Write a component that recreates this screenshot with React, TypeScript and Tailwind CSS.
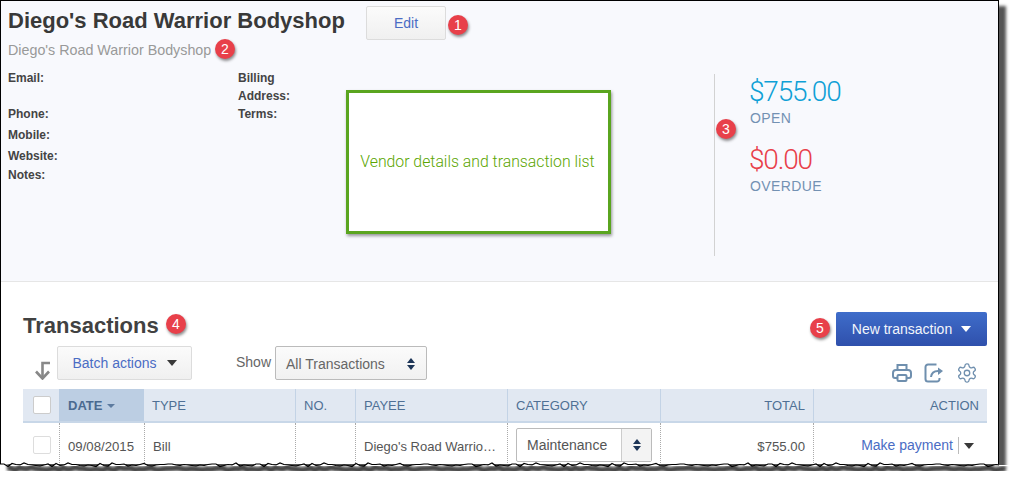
import { ReactNode } from 'react';

const tornPoints = (() => {
  const pts: [number, number][] = [];
  const jitter = [0, 1.5, 0.5, 2, 1, -0.5, 1.5, 0, 2, 0.5, 1, -1, 1.5, 0.5, 2.5, 1];
  for (let i = 0; i <= 250; i++) {
    const x = i * 4;
    const y = 9 + jitter[(i * 7 + (i >> 2)) % jitter.length];
    pts.push([Math.min(x, 999), y]);
  }
  return pts;
})();

const tornLine = tornPoints.map(([x, y]) => `${x},${y}`).join(' ');

function TornEdge() {
  return (
    <svg className="absolute left-0 top-[455px] z-30" width="1014" height="30">
      <defs>
        <filter id="blur-edge"><feGaussianBlur stdDeviation="1.4" /></filter>
      </defs>
      <polygon points={`0,9 ${tornLine} 1014,10 1014,30 0,30`} fill="#fff" />
      <polyline points={tornPoints.map(([x, y]) => `${x + 7},${y + 4}`).join(' ')} fill="none" stroke="#444" strokeWidth="6" filter="url(#blur-edge)" />
      <polyline points={tornLine} fill="none" stroke="#000" strokeWidth="1.2" />
    </svg>
  );
}

function Badge({ n, className }: { n: number; className: string }) {
  return (
    <span className={`absolute z-20 flex h-[20px] w-[20px] items-center justify-center rounded-full bg-[#e8404a] text-[14px] text-white shadow-[1px_2px_3px_rgba(0,0,0,0.45)] ${className}`}>
      {n}
    </span>
  );
}

function Label({ children, className = '' }: { children: ReactNode; className?: string }) {
  return <div className={`text-[12px] font-bold leading-[18px] text-[#444] ${className}`}>{children}</div>;
}

function Caret({ className = '' }: { className?: string }) {
  return <span className={`inline-block h-0 w-0 border-x-[5px] border-t-[6px] border-x-transparent ${className}`} />;
}

function UpDown() {
  return (
    <span className="flex flex-col items-center gap-[2px]">
      <span className="h-0 w-0 border-x-[4.5px] border-b-[5px] border-x-transparent border-b-[#1d3557]" />
      <span className="h-0 w-0 border-x-[4.5px] border-t-[5px] border-x-transparent border-t-[#1d3557]" />
    </span>
  );
}

function HeaderCell({ children, className = '' }: { children?: ReactNode; className?: string }) {
  return <div className={`flex h-full items-center border-l border-[#c3d3e6] px-[8px] pt-px text-[13px] text-[#4f7095] ${className}`}>{children}</div>;
}

function RowCell({ children, className = '' }: { children?: ReactNode; className?: string }) {
  return <div className={`flex h-[46px] items-start border-l border-dotted border-[#aaa] px-[8px] text-[13.2px] text-[#555] ${className}`}>{children}</div>;
}

const gridCols = 'grid grid-cols-[36px_85px_151px_60px_152px_153px_153px_174px]';

export default function App() {
  return (
    <div className="relative h-[485px] w-[1014px] overflow-hidden bg-white font-['Liberation_Sans',sans-serif]">
      <div className="h-[464px] w-[999px] overflow-hidden border-x border-t border-black bg-white shadow-[7px_6px_3px_#555]">
        {/* vendor panel */}
        <div className="relative flex h-[281px] border-b border-[#e6e6e6] bg-[#f8f9fd]">
          <div className="w-[713px] pl-[7px]">
            <div className="flex items-start pt-[5px]">
              <h1 className="w-[358px] text-[22px] font-bold leading-[30px] text-[#393939]">Diego's Road Warrior Bodyshop</h1>
              <button className="h-[34px] w-[80px] rounded-[2px] border border-[#dcdcdc] bg-gradient-to-b from-[#fbfbfb] to-[#f0f0f0] text-[14px] text-[#4a6cc4]">Edit</button>
            </div>
            <div className="text-[14.3px] leading-[20px] text-[#999]">Diego's Road Warrior Bodyshop</div>
            <div className="mt-[9px] flex">
              <div className="w-[230px]">
                <Label>Email:</Label>
                <Label className="mt-[18px]">Phone:</Label>
                <Label className="mt-[3px]">Mobile:</Label>
                <Label className="mt-[3px]">Website:</Label>
                <Label className="mt-px">Notes:</Label>
              </div>
              <div>
                <Label>Billing</Label>
                <Label>Address:</Label>
                <Label>Terms:</Label>
              </div>
            </div>
          </div>
          <div className="mt-[73px] h-[182px] w-px bg-[#d2d2d2]" />
          <div className="ml-[35px] pt-[73px]">
            <div className="-ml-px font-['Roboto',sans-serif] text-[28px] font-light leading-[36px] tracking-[-1.2px] text-[#0ea0d6]">$755.00</div>
            <div className="-mt-px text-[14px] leading-[18px] tracking-[0.4px] text-[#7391b3]">OPEN</div>
            <div className="-ml-px mt-[15px] font-['Roboto',sans-serif] text-[28px] font-light leading-[36px] tracking-[-1.2px] text-[#e8404a]">$0.00</div>
            <div className="-mt-px text-[14px] leading-[18px] tracking-[0.4px] text-[#7391b3]">OVERDUE</div>
          </div>

          <div className="absolute left-[345px] top-[89px] z-10 flex h-[144px] w-[265px] items-center justify-center border-[3px] border-[#5aa51f] bg-white pr-[2px] font-['Roboto',sans-serif] text-[15.8px] font-light text-[#5aa500] shadow-[1px_2px_3px_rgba(0,0,0,0.4)]">
            Vendor details and transaction list
          </div>
          <Badge n={1} className="left-[447px] top-[14px]" />
          <Badge n={2} className="left-[214px] top-[38px]" />
          <Badge n={3} className="left-[715px] top-[118px]" />
        </div>

        {/* transactions */}
        <div className="relative pl-[22px] pr-[11px] pt-[30px]">
          <div className="flex items-start justify-between">
            <h2 className="text-[22px] font-bold leading-[28px] text-[#414141]">Transactions</h2>
            <button className="flex h-[34px] w-[151px] items-center justify-center gap-[9px] rounded-[2px] bg-gradient-to-b from-[#3f6dca] to-[#2f50ac] text-[14px] font-medium text-[#f2f5fb]">
              New transaction <Caret className="border-t-white" />
            </button>
          </div>
          <div className="flex h-[43px] items-start">
            <svg className="mt-[15px] ml-[11px]" width="17" height="19" viewBox="0 0 17 19" fill="none" stroke="#888" strokeWidth="2.6">
              <path d="M16 2H8.500V17" />
              <path d="M2 10.500l6.500 7 6.500-7" />
            </svg>
            <button className="ml-[6px] flex h-[34px] w-[135px] items-center justify-center gap-[10px] rounded-[2px] border border-[#dcdcdc] bg-gradient-to-b from-[#fbfbfb] to-[#f0f0f0] text-[14px] text-[#4a6cc4]">
              Batch actions <Caret className="border-t-[#393939]" />
            </button>
            <span className="ml-[44px] mt-[6px] text-[14px] text-[#666]">Show</span>
            <div className="ml-[4px] flex h-[34px] w-[152px] items-center justify-between rounded-[2px] border border-[#bbb] bg-gradient-to-b from-[#fbfbfb] to-[#f1f1f1] pl-[10px] pr-[11px] pt-[2px] text-[14px] text-[#666]">
              All Transactions <UpDown />
            </div>
            <div className="ml-auto mr-[9px] mt-[16px] flex items-center gap-[12px]">
              <svg width="20" height="20" viewBox="0 0 20 20" fill="none" stroke="#6f8fae" strokeWidth="2">
                <path d="M5.500 7V2h9v5" />
                <path d="M5 15H3a2 2 0 0 1-2-2v-3a3 3 0 0 1 3-3h12a3 3 0 0 1 3 3v3a2 2 0 0 1-2 2h-2" />
                <rect x="5.500" y="12" width="9" height="6" rx="1" />
              </svg>
              <svg width="20" height="20" viewBox="0 0 20 20" fill="none" stroke="#6f8fae" strokeWidth="2">
                <path d="M12.500 1.500H4a2.500 2.500 0 0 0-2.500 2.500v12A2.500 2.500 0 0 0 4 18.500h9a2.500 2.500 0 0 0 2.500-2.500v-1" />
                <path d="M7 14c.5-4 3-6 7-6" />
                <path d="M14 4.500l5 3.500-5 4z" fill="#6f8fae" stroke="none" />
              </svg>
              <svg width="22" height="22" viewBox="0 0 24 24" fill="none" stroke="#6f8fae" strokeWidth="1.400">
                <path d="M12.220 2h-.44a2 2 0 0 0-2 2v.18a2 2 0 0 1-1 1.730l-.43.25a2 2 0 0 1-2 0l-.15-.08a2 2 0 0 0-2.730.73l-.22.38a2 2 0 0 0 .73 2.730l.15.1a2 2 0 0 1 1 1.720v.51a2 2 0 0 1-1 1.740l-.15.09a2 2 0 0 0-.73 2.730l.22.38a2 2 0 0 0 2.730.73l.15-.08a2 2 0 0 1 2 0l.43.25a2 2 0 0 1 1 1.730V20a2 2 0 0 0 2 2h.44a2 2 0 0 0 2-2v-.18a2 2 0 0 1 1-1.730l.43-.25a2 2 0 0 1 2 0l.15.08a2 2 0 0 0 2.730-.73l.22-.39a2 2 0 0 0-.73-2.730l-.15-.08a2 2 0 0 1-1-1.740v-.5a2 2 0 0 1 1-1.740l.15-.09a2 2 0 0 0 .73-2.730l-.22-.38a2 2 0 0 0-2.730-.73l-.15.08a2 2 0 0 1-2 0l-.43-.25a2 2 0 0 1-1-1.730V4a2 2 0 0 0-2-2z" />
                <circle cx="12" cy="12" r="3" />
              </svg>
            </div>
          </div>

          <div className={`${gridCols} h-[34px] items-center border-b-2 border-[#c8d7e8] bg-[#e1e8f2]`}>
            <div className="flex h-full items-center pl-[10px]">
              <span className="h-[18px] w-[18px] rounded-[2px] border border-[#ccc] bg-white" />
            </div>
            <div className="flex h-full items-center gap-[5px] bg-[#bccee3] px-[9px] pt-px text-[13px] font-bold text-[#4a6a90]">
              DATE <span className="h-0 w-0 border-x-[4px] border-t-[4px] border-x-transparent border-t-[#5d7b9f]" />
            </div>
            <HeaderCell className="border-l-0">TYPE</HeaderCell>
            <HeaderCell>NO.</HeaderCell>
            <HeaderCell>PAYEE</HeaderCell>
            <HeaderCell>CATEGORY</HeaderCell>
            <HeaderCell className="justify-end">TOTAL</HeaderCell>
            <HeaderCell className="justify-end">ACTION</HeaderCell>
          </div>

          <div className={gridCols}>
            <div className="flex h-[46px] items-start pl-[10px] pt-[13px]">
              <span className="h-[18px] w-[18px] rounded-[2px] border border-[#ddd] bg-white" />
            </div>
            <RowCell className="pt-[14px]">09/08/2015</RowCell>
            <RowCell className="pt-[14px]">Bill</RowCell>
            <RowCell />
            <RowCell className="pt-[14px]"><span className="whitespace-nowrap text-[13px]">Diego's Road Warrio…</span></RowCell>
            <RowCell className="pt-[5px]">
              <div className="flex h-[34px] w-[136px] items-center rounded-[2px] border border-[#bbb] bg-white pl-[10px] text-[14px] text-[#555]">
                <span className="flex-1">Maintenance</span>
                <span className="flex h-full w-[30px] items-center justify-center border-l border-[#ccc] bg-[#f3f3f3]"><UpDown /></span>
              </div>
            </RowCell>
            <RowCell className="justify-end pt-[14px]">$755.00</RowCell>
            <RowCell className="justify-end pr-[13px] pt-[14px]">
              <span className="text-[14px] leading-[16px] text-[#4a6cc4]">Make payment</span>
              <span className="ml-[5px] h-[17px] w-px bg-[#bbb]" />
              <Caret className="ml-[5px] mt-[6px] border-t-[#393939]" />
            </RowCell>
          </div>

          <Badge n={4} className="left-[165px] top-[32px]" />
          <Badge n={5} className="left-[809px] top-[36px]" />
        </div>
      </div>
      <TornEdge />
    </div>
  );
}
